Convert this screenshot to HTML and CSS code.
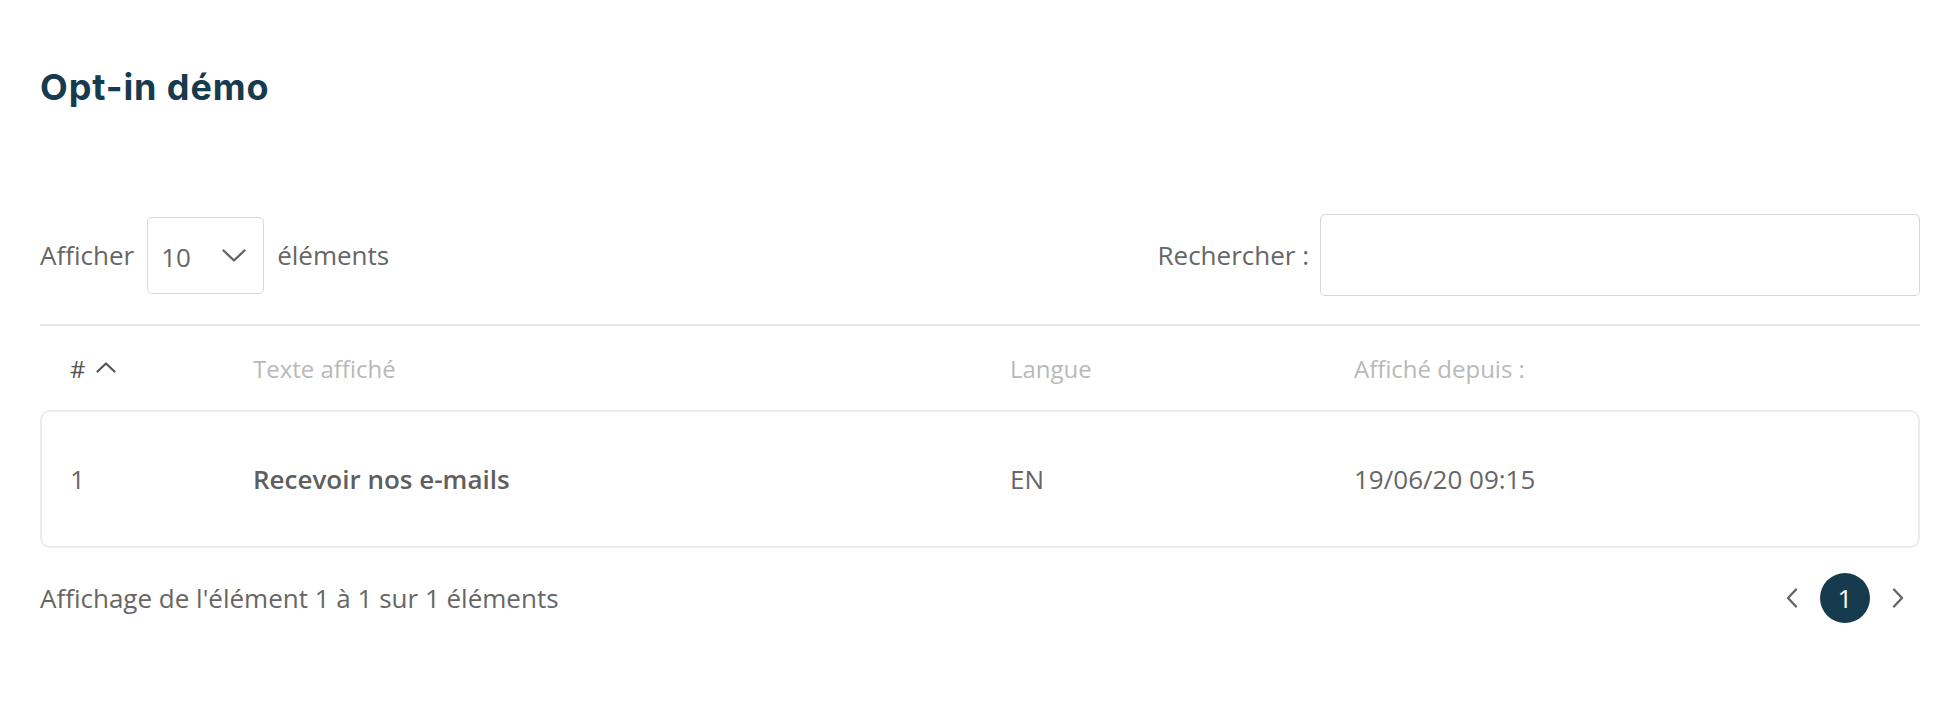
FILE: index.html
```html
<!DOCTYPE html>
<html lang="fr">
<head>
<meta charset="utf-8">
<title>Opt-in démo</title>
<link rel="stylesheet" href="styles.css">
</head>
<body>
<main class="page">
  <h1 class="title">Opt-in démo</h1>

  <div class="toolbar">
    <div class="length">
      <span>Afficher</span>
      <div class="select">
        <span class="select-value">10</span>
        <svg class="select-chev" width="24" height="13" viewBox="0 0 24 13"><path d="M1.5 1.5 L12 11.5 L22.5 1.5" fill="none" stroke="#666" stroke-width="2.4" stroke-linecap="round" stroke-linejoin="round"/></svg>
      </div>
      <span>éléments</span>
    </div>
    <div class="search">
      <span>Rechercher :</span>
      <div class="input"></div>
    </div>
  </div>

  <div class="divider"></div>

  <div class="thead cols">
    <div class="th th-sorted">#
      <svg class="sort-icon" width="20" height="11" viewBox="0 0 20 11"><path d="M1.5 9.5 L10 1.5 L18.5 9.5" fill="none" stroke="#555" stroke-width="2.2" stroke-linecap="round" stroke-linejoin="round"/></svg>
    </div>
    <div class="th">Texte affiché</div>
    <div class="th">Langue</div>
    <div class="th">Affiché depuis :</div>
  </div>

  <div class="card cols">
    <div class="td">1</div>
    <div class="td td-bold">Recevoir nos e-mails</div>
    <div class="td">EN</div>
    <div class="td">19/06/20 09:15</div>
  </div>

  <div class="footer">
    <div class="info">Affichage de l'élément 1 à 1 sur 1 éléments</div>
    <div class="pager">
      <svg class="pg-arrow" width="12" height="20" viewBox="0 0 12 20"><path d="M10 1.5 L2 10 L10 18.5" fill="none" stroke="#666" stroke-width="2.4" stroke-linecap="round" stroke-linejoin="round"/></svg>
      <span class="pg-current">1</span>
      <svg class="pg-arrow" width="12" height="20" viewBox="0 0 12 20"><path d="M2 1.5 L10 10 L2 18.5" fill="none" stroke="#666" stroke-width="2.4" stroke-linecap="round" stroke-linejoin="round"/></svg>
    </div>
  </div>
</main>
</body>
</html>
```

FILE: styles.css
```css
html, body {
  margin: 0;
  padding: 0;
  background: #ffffff;
}

body {
  font-family: "Open Sans", "Noto Sans", sans-serif;
  font-size: 26px;
  color: #666666;
}

.page {
  padding: 0 16px 0 40px;
}

.title {
  margin: 0;
  padding-top: 65px;
  height: 110px;
  box-sizing: border-box;
  font-family: "Inter", "Lato", sans-serif;
  font-weight: 650;
  font-size: 36px;
  line-height: 44px;
  color: #163a4e;
  letter-spacing: 0.9px;
}

.toolbar {
  margin-top: 104px;
  height: 82px;
  display: flex;
  align-items: center;
  justify-content: space-between;
}

.length {
  display: flex;
  align-items: center;
  gap: 13px;
}

.select {
  width: 117px;
  height: 77px;
  box-sizing: border-box;
  border: 1.5px solid #d8d8d8;
  border-radius: 5px;
  display: flex;
  align-items: center;
  justify-content: space-between;
  padding: 0 17px 0 13px;
}

.select-value {
  line-height: 1;
  padding-top: 4px;
}

.select-chev {
  display: block;
}

.search {
  display: flex;
  align-items: center;
  gap: 11px;
}

.input {
  width: 600px;
  height: 82px;
  box-sizing: border-box;
  border: 1.5px solid #d8d8d8;
  border-radius: 5px;
}

.divider {
  margin-top: 28px;
  height: 2px;
  background: #e9e9e9;
}

.cols {
  display: grid;
  grid-template-columns: 183px 757px 344px 1fr;
  align-items: center;
  padding-left: 30px;
}

.thead {
  height: 84px;
  font-size: 24px;
  color: #b9b9b9;
}

.th-sorted {
  color: #555555;
  display: flex;
  align-items: center;
  gap: 10px;
}

.sort-icon {
  display: block;
  margin-top: -2px;
}

.card {
  height: 138px;
  box-sizing: border-box;
  border: 2px solid #ececec;
  border-radius: 10px;
  padding-left: 28px;
  color: #666666;
}

.td-bold {
  font-weight: 600;
  color: #5f5f5f;
}

.footer {
  height: 100px;
  display: flex;
  align-items: center;
  justify-content: space-between;
}

.pager {
  display: flex;
  align-items: center;
  gap: 22px;
  padding-right: 16px;
}

.pg-arrow {
  display: block;
}

.pg-current {
  width: 50px;
  height: 50px;
  border-radius: 50%;
  background: #163a4e;
  color: #ffffff;
  display: flex;
  align-items: center;
  justify-content: center;
  line-height: 1;
}
```
